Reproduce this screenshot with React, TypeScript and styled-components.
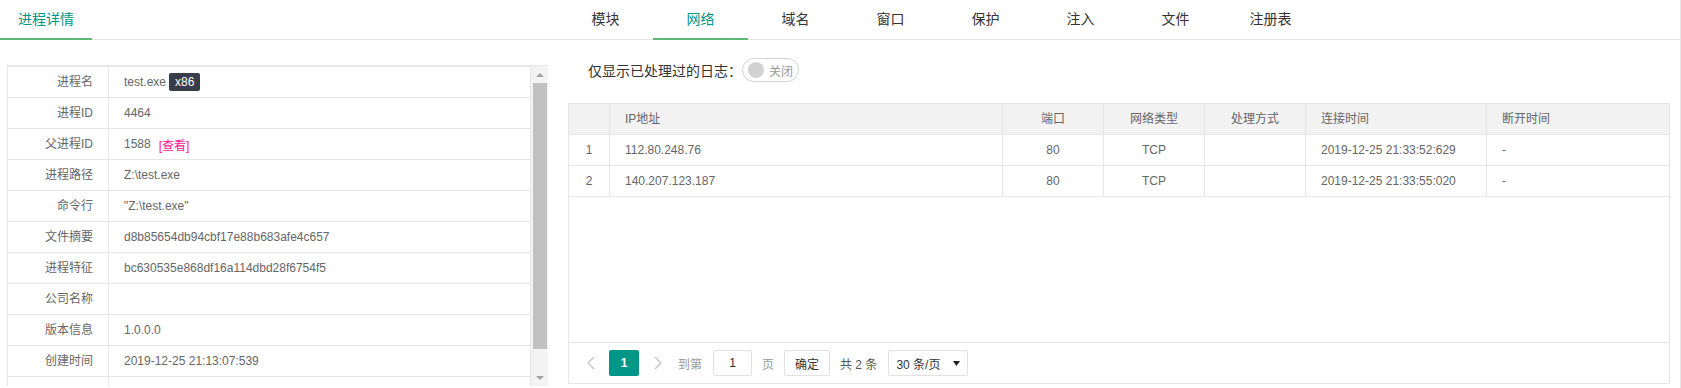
import React from "react";
import styled, { createGlobalStyle } from "styled-components";

const GlobalStyle = createGlobalStyle`
  html, body { margin: 0; padding: 0; background: #fff; }
  body {
    font-family: "Liberation Sans", Arial, "Noto Sans CJK SC", sans-serif;
    font-size: 12px;
    color: #666;
  }
  * { box-sizing: border-box; }
`;

const Page = styled.div`
  display: flex;
  width: 1681px;
  height: 388px;
  overflow: hidden;
  border-right: 1px solid #e6e6e6;
`;

const LeftPanel = styled.section`
  width: 550px;
  flex: none;
  display: flex;
  flex-direction: column;
`;

const RightPanel = styled.section`
  flex: 1;
  display: flex;
  flex-direction: column;
`;

const TabHeader = styled.ul<{ $indent: number }>`
  display: flex;
  height: 40px;
  margin: 0;
  padding: 0 0 0 ${(p) => p.$indent}px;
  list-style: none;
  border-bottom: 1px solid #e6e6e6;
`;

const Tab = styled.li<{ $active?: boolean; $w: number; $pad: number }>`
  position: relative;
  min-width: ${(p) => p.$w}px;
  height: 39px;
  line-height: 39px;
  padding: 0 ${(p) => p.$pad}px;
  text-align: center;
  font-size: 14px;
  color: ${(p) => (p.$active ? "#009688" : "#333")};
  cursor: pointer;
  &::after {
    content: "";
    display: ${(p) => (p.$active ? "block" : "none")};
    position: absolute;
    left: 0;
    right: 0;
    bottom: -1px;
    height: 2px;
    background: #5fb878;
  }
`;

const InfoBox = styled.div`
  display: flex;
  margin: 25px 0 0 7px;
  width: 541px;
  height: 321px;
  border-top: 1px solid #e6e6e6;
`;

const Viewport = styled.div`
  width: 524px;
  height: 320px;
  overflow: hidden;
`;

const ScrollBar = styled.div`
  display: flex;
  flex-direction: column;
  width: 17px;
  height: 320px;
  background: #f3f3f3;
`;

const ScrollButton = styled.div`
  display: flex;
  align-items: center;
  justify-content: center;
  height: 17px;
  flex: none;
  padding-left: 1px;
`;

const ScrollThumb = styled.div`
  height: 266px;
  flex: none;
  margin: 0 1px 0 2px;
  background: #c1c1c1;
`;

const ScrollTrack = styled.div`
  flex: 1;
`;

const InfoList = styled.div`
  width: 524px;
  border-left: 1px solid #e6e6e6;
  border-top: 1px solid #e6e6e6;
`;

const InfoRow = styled.div`
  display: grid;
  grid-template-columns: 101px 422px;
  height: 31px;
`;

const InfoLabel = styled.div`
  border-right: 1px solid #e6e6e6;
  border-bottom: 1px solid #e6e6e6;
  padding-right: 15px;
  line-height: 30px;
  text-align: right;
  color: #666;
  white-space: nowrap;
`;

const InfoValue = styled.div`
  display: flex;
  align-items: center;
  border-right: 1px solid #e6e6e6;
  border-bottom: 1px solid #e6e6e6;
  padding-left: 15px;
  color: #666;
  white-space: nowrap;
`;

const Badge = styled.span`
  display: inline-block;
  height: 18px;
  line-height: 18px;
  padding: 0 6px;
  margin-left: 3px;
  border-radius: 2px;
  background: #393d49;
  color: #fff;
  font-size: 12px;
`;

const ViewLink = styled.a`
  margin-left: 8px;
  color: #ff1493;
  text-decoration: none;
  cursor: pointer;
`;

const Content = styled.div`
  padding: 0 10px 0 18px;
`;

const FilterRow = styled.div`
  display: flex;
  align-items: center;
  height: 24px;
  margin-top: 18px;
  padding-left: 20px;
  font-size: 14px;
  color: #333;
`;

const Switch = styled.div`
  display: flex;
  align-items: center;
  height: 24px;
  min-width: 35px;
  padding: 0 5px;
  border: 1px solid #d2d2d2;
  border-radius: 20px;
  background: #fff;
`;

const SwitchKnob = styled.i`
  width: 16px;
  height: 16px;
  border-radius: 50%;
  background: #d2d2d2;
`;

const SwitchText = styled.em`
  margin-left: 5px;
  font-style: normal;
  font-size: 12px;
  color: #999;
`;

const TableBox = styled.div`
  margin-top: 21px;
  height: 281px;
  border: 1px solid #e6e6e6;
  display: flex;
  flex-direction: column;
`;

const TableBody = styled.div`
  height: 238px;
`;

const GridRow = styled.div<{ $head?: boolean }>`
  display: grid;
  grid-template-columns: 41px 393px 101px 101px 101px 181px 1fr;
  height: 31px;
  background: ${(p) => (p.$head ? "#f2f2f2" : "#fff")};
`;

const Cell = styled.div<{ $align?: "left" | "center"; $last?: boolean }>`
  border-bottom: 1px solid #e6e6e6;
  border-right: ${(p) => (p.$last ? "none" : "1px solid #e6e6e6")};
  padding: 0 15px;
  line-height: 30px;
  text-align: ${(p) => p.$align ?? "left"};
  color: #666;
  white-space: nowrap;
  overflow: hidden;
`;

const Pager = styled.div`
  display: flex;
  align-items: center;
  height: 41px;
  border-top: 1px solid #e6e6e6;
  padding-left: 7px;
`;

const PageArrow = styled.span<{ $gap: number }>`
  display: flex;
  align-items: center;
  justify-content: center;
  width: 30px;
  height: 26px;
  margin-left: ${(p) => p.$gap}px;
`;

const PageCurrent = styled.span`
  display: flex;
  align-items: center;
  justify-content: center;
  width: 30px;
  height: 26px;
  margin-left: 3px;
  border-radius: 2px;
  background: #009688;
  color: #fff;
  font-weight: bold;
`;

const PageText = styled.span<{ $gap: number; $dark?: boolean }>`
  margin-left: ${(p) => p.$gap}px;
  color: ${(p) => (p.$dark ? "#555" : "#999")};
  white-space: pre;
`;

const PageInput = styled.input`
  width: 39px;
  height: 26px;
  margin: 0 0 0 11px;
  padding: 0;
  border: 1px solid #e2e2e2;
  border-radius: 2px;
  text-align: center;
  font: inherit;
  color: #333;
  outline: none;
`;

const PageButton = styled.button`
  width: 46px;
  height: 26px;
  margin-left: 10px;
  padding: 0;
  border: 1px solid #e2e2e2;
  border-radius: 2px;
  background: #fff;
  font: inherit;
  color: #333;
`;

const PageSelect = styled.div`
  display: flex;
  align-items: center;
  justify-content: space-between;
  width: 80px;
  height: 26px;
  margin-left: 11px;
  padding: 0 7px 0 7px;
  border: 1px solid #e2e2e2;
  border-radius: 2px;
  color: #333;
`;

const Chevron = ({ dir }: { dir: "left" | "right" }) => (
  <svg width="8" height="14" viewBox="0 0 8 14">
    <polyline
      points={dir === "left" ? "7,1 1,7 7,13" : "1,1 7,7 1,13"}
      fill="none"
      stroke="#c2c2c2"
      strokeWidth="1.2"
    />
  </svg>
);

const Caret = () => (
  <svg width="7" height="5" viewBox="0 0 7 5">
    <polygon points="0,0 7,0 3.5,5" fill="#222" />
  </svg>
);

const ScrollArrow = ({ dir }: { dir: "up" | "down" }) => (
  <svg width="8" height="4" viewBox="0 0 8 4">
    <polygon points={dir === "up" ? "0,4 8,4 4,0" : "0,0 8,0 4,4"} fill="#a3a3a3" />
  </svg>
);

const rightTabs = ["模块", "网络", "域名", "窗口", "保护", "注入", "文件", "注册表"];

const info: { label: string; value: React.ReactNode }[] = [
  {
    label: "进程名",
    value: (
      <>
        test.exe<Badge>x86</Badge>
      </>
    ),
  },
  { label: "进程ID", value: "4464" },
  {
    label: "父进程ID",
    value: (
      <>
        1588<ViewLink>[查看]</ViewLink>
      </>
    ),
  },
  { label: "进程路径", value: "Z:\\test.exe" },
  { label: "命令行", value: "\"Z:\\test.exe\"" },
  { label: "文件摘要", value: "d8b85654db94cbf17e88b683afe4c657" },
  { label: "进程特征", value: "bc630535e868df16a114dbd28f6754f5" },
  { label: "公司名称", value: "" },
  { label: "版本信息", value: "1.0.0.0" },
  { label: "创建时间", value: "2019-12-25 21:13:07:539" },
  { label: "", value: "" },
];

const rows = [
  { ip: "112.80.248.76", port: "80", type: "TCP", mode: "", conn: "2019-12-25 21:33:52:629", disc: "-" },
  { ip: "140.207.123.187", port: "80", type: "TCP", mode: "", conn: "2019-12-25 21:33:55:020", disc: "-" },
];

export default function App() {
  return (
    <>
      <GlobalStyle />
      <Page>
        <LeftPanel>
          <TabHeader $indent={0}>
            <Tab $active $w={92} $pad={18}>
              进程详情
            </Tab>
          </TabHeader>
          <InfoBox>
            <Viewport>
              <InfoList>
                {info.map((r, i) => (
                  <InfoRow key={i}>
                    <InfoLabel>{r.label}</InfoLabel>
                    <InfoValue>{r.value}</InfoValue>
                  </InfoRow>
                ))}
              </InfoList>
            </Viewport>
            <ScrollBar>
              <ScrollButton>
                <ScrollArrow dir="up" />
              </ScrollButton>
              <ScrollThumb />
              <ScrollTrack />
              <ScrollButton>
                <ScrollArrow dir="down" />
              </ScrollButton>
            </ScrollBar>
          </InfoBox>
        </LeftPanel>
        <RightPanel>
          <TabHeader $indent={8}>
            {rightTabs.map((t) => (
              <Tab key={t} $w={95} $pad={15} $active={t === "网络"}>
                {t}
              </Tab>
            ))}
          </TabHeader>
          <Content>
            <FilterRow>
              仅显示已处理过的日志：
              <Switch>
                <SwitchKnob />
                <SwitchText>关闭</SwitchText>
              </Switch>
            </FilterRow>
            <TableBox>
              <TableBody>
                <GridRow $head>
                  <Cell />
                  <Cell>IP地址</Cell>
                  <Cell $align="center">端口</Cell>
                  <Cell $align="center">网络类型</Cell>
                  <Cell $align="center">处理方式</Cell>
                  <Cell>连接时间</Cell>
                  <Cell $last>断开时间</Cell>
                </GridRow>
                {rows.map((r, i) => (
                  <GridRow key={r.ip}>
                    <Cell $align="center">{i + 1}</Cell>
                    <Cell>{r.ip}</Cell>
                    <Cell $align="center">{r.port}</Cell>
                    <Cell $align="center">{r.type}</Cell>
                    <Cell $align="center">{r.mode}</Cell>
                    <Cell>{r.conn}</Cell>
                    <Cell $last>{r.disc}</Cell>
                  </GridRow>
                ))}
              </TableBody>
              <Pager>
                <PageArrow $gap={0}>
                  <Chevron dir="left" />
                </PageArrow>
                <PageCurrent>1</PageCurrent>
                <PageArrow $gap={4}>
                  <Chevron dir="right" />
                </PageArrow>
                <PageText $gap={5}>到第</PageText>
                <PageInput defaultValue="1" />
                <PageText $gap={10}>页</PageText>
                <PageButton>确定</PageButton>
                <PageText $gap={10} $dark>
                  共 2 条
                </PageText>
                <PageSelect>
                  <span>30 条/页</span>
                  <Caret />
                </PageSelect>
              </Pager>
            </TableBox>
          </Content>
        </RightPanel>
      </Page>
    </>
  );
}
